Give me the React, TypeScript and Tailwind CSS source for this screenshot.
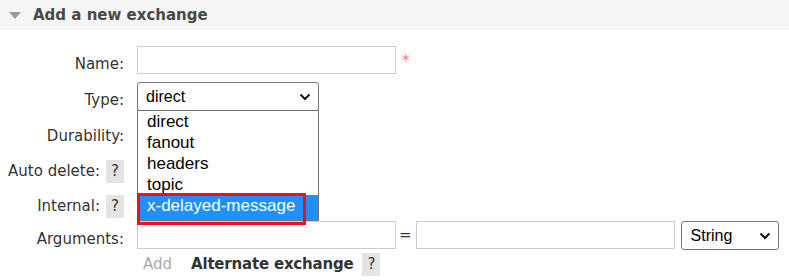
import React from 'react'

function Help() {
  return (
    <span className="inline-flex items-center justify-center w-[18px] h-[23px] bg-[#e4e4e4] text-[#333] text-[15px]">?</span>
  )
}

function Chevron() {
  return (
    <svg width="12" height="8" viewBox="0 0 12 8" className="shrink-0">
      <path d="M1.5 1.5 L6 6 L10.5 1.5" fill="none" stroke="#111" strokeWidth="2" />
    </svg>
  )
}

function Label({ text, help }: { text: string; help?: boolean }) {
  return (
    <div className="w-[124px] h-[28px] mt-[4px] flex items-center justify-end gap-[6px] whitespace-nowrap">
      <span>{text}</span>
      {help && <Help />}
    </div>
  )
}

const options = ['direct', 'fanout', 'headers', 'topic', 'x-delayed-message']

export default function App() {
  return (
    <div className="relative w-[789px] h-[280px] overflow-hidden bg-white font-['DejaVu_Sans',sans-serif] text-[15px] text-[#333]">
      <div className="h-[30px] bg-[#f5f5f5] flex items-center">
        <svg width="12" height="7" viewBox="0 0 12 7" className="ml-[9px]">
          <path d="M0 0 H12 L6 7 Z" fill="#9a9a9a" />
        </svg>
        <span className="ml-[12px] font-bold text-[#484848]">Add a new exchange</span>
      </div>

      <div className="mt-[16px]">
        <div className="flex h-[36px]">
          <Label text="Name:" />
          <div className="ml-[13px] flex items-start">
            <div className="w-[259px] h-[28px] border border-[#ccc] bg-white" />
            <span className="ml-[6px] mt-[4px] text-[#f08080]">*</span>
          </div>
        </div>

        <div className="flex h-[36px]">
          <Label text="Type:" />
          <div className="ml-[13px] w-[182px] h-[29px] border border-[#767676] rounded-[3px] flex items-center justify-between pl-[8px] pr-[7px] font-['Liberation_Sans',sans-serif] text-[16px] text-black">
            <span>direct</span>
            <Chevron />
          </div>
        </div>

        <div className="flex h-[35px]">
          <Label text="Durability:" />
          <div className="ml-[13px] mt-[2px] w-[100px] h-[28px] border border-[#767676] rounded-[3px]" />
        </div>

        <div className="flex h-[35px]">
          <Label text="Auto delete:" help />
          <div className="ml-[13px] mt-[2px] w-[60px] h-[28px] border border-[#767676] rounded-[3px]" />
        </div>

        <div className="flex h-[33px]">
          <Label text="Internal:" help />
          <div className="ml-[13px] mt-[2px] w-[60px] h-[28px] border border-[#767676] rounded-[3px]" />
        </div>

        <div className="flex h-[30px]">
          <Label text="Arguments:" />
          <div className="ml-[13px] flex items-start">
            <div className="w-[259px] h-[28px] border border-[#ccc] bg-white" />
            <span className="ml-[3px] mt-[3px]">=</span>
            <div className="ml-[4px] w-[259px] h-[28px] border border-[#ccc] bg-white" />
            <div className="ml-[6px] w-[98px] h-[29px] border border-[#767676] rounded-[3px] flex items-center justify-between pl-[9px] pr-[7px] font-['Liberation_Sans',sans-serif] text-[16px] text-black">
              <span>String</span>
              <Chevron />
            </div>
          </div>
        </div>

        <div className="flex items-center h-[26px] pl-[143px]">
          <span className="text-[#aaa]">Add</span>
          <span className="ml-[19px] font-bold text-[#333] tracking-[-0.2px]">Alternate exchange</span>
          <span className="ml-[9px]"><Help /></span>
        </div>
      </div>

      {/* open select list */}
      <div className="absolute left-[137px] top-[110px] w-[182px] h-[111px] bg-white border border-[#767676] font-['Liberation_Sans',sans-serif] text-[17px] text-black">
        {options.map(o => (
          <div
            key={o}
            className={o === 'x-delayed-message' ? 'h-[25px] leading-[22px] pl-[9px] bg-[#1e90ff] text-white' : 'h-[21px] leading-[22px] pl-[9px]'}
          >
            {o}
          </div>
        ))}
      </div>
      <div className="absolute left-[137px] top-[193px] w-[169px] h-[32px] border-[3px] border-[#e81123]" />
    </div>
  )
}
